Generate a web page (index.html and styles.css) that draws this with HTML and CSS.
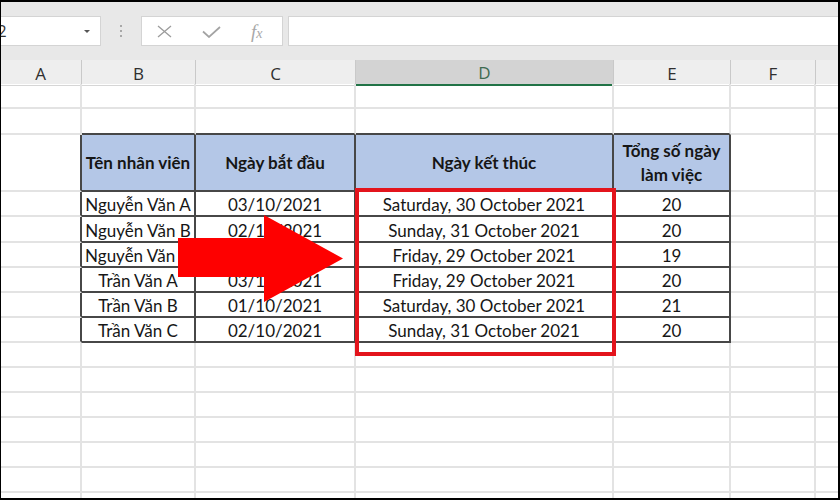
FILE: index.html
```html
<!DOCTYPE html>
<html lang="vi">
<head>
<meta charset="utf-8">
<title>Excel</title>
<link rel="stylesheet" href="styles.css">
</head>
<body>
<div class="frame">
  <div class="toolbar">
    <div class="namebox"><span class="ref">D2</span><span class="caret"></span></div>
    <div class="grip"><i></i><i></i><i></i></div>
    <div class="fbtns">
      <svg class="ico-x" width="15" height="13" viewBox="0 0 15 13"><path d="M1 1L14 12M14 1L1 12" stroke="#9c9c9c" stroke-width="1.3" fill="none"/></svg>
      <svg class="ico-ok" width="19" height="12" viewBox="0 0 19 12"><path d="M1 5.5L7 11L18 1" stroke="#a3a3a3" stroke-width="1.7" fill="none"/></svg>
      <span class="fx">f<span class="fx-x">x</span></span>
    </div>
    <div class="finput"></div>
  </div>
  <div class="colheads">
    <div class="ch">A</div><div class="ch">B</div><div class="ch">C</div><div class="ch sel">D</div><div class="ch">E</div><div class="ch">F</div><div class="ch"></div>
  </div>
  <div class="sheet">
    <div class="row"><div></div><div></div><div></div><div></div><div></div><div></div><div></div></div>
    <div class="row r26"><div></div><div class="tb"></div><div class="tb"></div><div class="tb"></div><div class="tb"></div><div></div><div></div></div>
    <div class="row hdr"><div class="tr"></div><div class="t name">Tên nhân viên</div><div class="t">Ngày bắt đầu</div><div class="t">Ngày kết thúc</div><div class="t two">Tổng số ngày<br>làm việc</div><div></div><div></div></div>
    <div class="row"><div class="tr"></div><div class="t name">Nguyễn Văn A</div><div class="t">03/10/2021</div><div class="t">Saturday, 30 October 2021</div><div class="t">20</div><div></div><div></div></div>
    <div class="row r26"><div class="tr"></div><div class="t name">Nguyễn Văn B</div><div class="t">02/10/2021</div><div class="t">Sunday, 31 October 2021</div><div class="t">20</div><div></div><div></div></div>
    <div class="row"><div class="tr"></div><div class="t name">Nguyễn Văn C</div><div class="t">01/10/2021</div><div class="t">Friday, 29 October 2021</div><div class="t">19</div><div></div><div></div></div>
    <div class="row"><div class="tr"></div><div class="t name">Trần Văn A</div><div class="t">03/10/2021</div><div class="t">Friday, 29 October 2021</div><div class="t">20</div><div></div><div></div></div>
    <div class="row"><div class="tr"></div><div class="t name">Trần Văn B</div><div class="t">01/10/2021</div><div class="t">Saturday, 30 October 2021</div><div class="t">21</div><div></div><div></div></div>
    <div class="row"><div class="tr"></div><div class="t name">Trần Văn C</div><div class="t">02/10/2021</div><div class="t">Sunday, 31 October 2021</div><div class="t">20</div><div></div><div></div></div>
    <div class="row"><div></div><div></div><div></div><div></div><div></div><div></div><div></div></div>
    <div class="row"><div></div><div></div><div></div><div></div><div></div><div></div><div></div></div>
    <div class="row"><div></div><div></div><div></div><div></div><div></div><div></div><div></div></div>
    <div class="row"><div></div><div></div><div></div><div></div><div></div><div></div><div></div></div>
    <div class="row"><div></div><div></div><div></div><div></div><div></div><div></div><div></div></div>
    <div class="row"><div></div><div></div><div></div><div></div><div></div><div></div><div></div></div>
    <div class="row"><div></div><div></div><div></div><div></div><div></div><div></div><div></div></div>
  </div>
  <div class="highlight"></div>
  <svg class="arrow" width="180" height="100" viewBox="0 0 180 100"><polygon points="8,28 94,28 94,5 173,48.5 94,92 94,67 8,67" fill="#fe0000"/></svg>
</div>
</body>
</html>
```

FILE: styles.css
```css
html, body {
  margin: 0;
  padding: 0;
  background: #fff;
}

.frame {
  position: relative;
  width: 840px;
  height: 500px;
  overflow: hidden;
  background: #fff;
  font-family: Lato, "Noto Sans", sans-serif;
}

.frame::after {
  content: "";
  position: absolute;
  inset: 0;
  border-style: solid;
  border-color: #000;
  border-width: 2px 2px 2px 1px;
  pointer-events: none;
}

/* ---------- toolbar ---------- */
.toolbar {
  height: 60px;
  box-sizing: border-box;
  padding-top: 16px;
  background: #e8e8e8;
  display: flex;
  align-items: flex-start;
}

.namebox {
  width: 101px;
  height: 30px;
  box-sizing: border-box;
  background: #fff;
  border: 1px solid #d4d4d4;
  border-left: none;
  display: flex;
  align-items: center;
  overflow: hidden;
  font-family: "Open Sans", sans-serif;
  font-size: 16px;
  color: #333;
}

.ref {
  margin-left: -14px;
}

.caret {
  margin-left: auto;
  margin-right: 10px;
  width: 0;
  height: 0;
  border-left: 3px solid transparent;
  border-right: 3px solid transparent;
  border-top: 3px solid #555;
}

.grip {
  width: 40px;
  height: 30px;
  box-sizing: border-box;
  padding-top: 9px;
  display: flex;
  flex-direction: column;
  align-items: center;
  gap: 3px;
}

.grip i {
  display: block;
  width: 2px;
  height: 2px;
  background: #a8a8a8;
}

.fbtns {
  width: 142px;
  height: 30px;
  box-sizing: border-box;
  background: #fff;
  border: 1px solid #d4d4d4;
  display: flex;
  align-items: center;
}

.ico-x {
  margin-left: 15px;
}

.ico-ok {
  margin-left: 30px;
  margin-top: 2px;
}

.fx {
  margin-left: 30px;
  font-family: "Liberation Serif", serif;
  font-style: italic;
  font-size: 19px;
  color: #a8a8a8;
  line-height: 1;
}

.fx-x {
  font-size: 14px;
}

.finput {
  flex: 1;
  height: 30px;
  box-sizing: border-box;
  margin-left: 5px;
  background: #fff;
  border: 1px solid #d4d4d4;
  border-right: none;
}

/* ---------- column headers ---------- */
.colheads {
  display: grid;
  grid-template-columns: 82px 114px 160px 258px 117px 85px 1fr;
  height: 24px;
  background: #eeeeee;
}

.ch {
  box-sizing: border-box;
  border-right: 1px solid #c9c9c9;
  border-bottom: 1px solid #d6d6d6;
  display: flex;
  align-items: center;
  justify-content: center;
  padding-top: 1px;
  font-family: "Open Sans", sans-serif;
  font-size: 17px;
  color: #2f2f2f;
}

.ch.sel {
  background: #d3d3d3;
  border-bottom: 2px solid #217346;
  color: #3e6b50;
}

/* ---------- sheet ---------- */
.row {
  display: grid;
  grid-template-columns: 82px 114px 160px 258px 117px 85px 1fr;
  height: 25px;
}

.row.r26 {
  height: 26px;
}

.row.hdr {
  height: 57px;
}

.row > div {
  box-sizing: border-box;
  border-right: 2px solid #e3e3e3;
  border-bottom: 2px solid #e3e3e3;
  display: flex;
  align-items: center;
  justify-content: center;
  padding-top: 2px;
  white-space: nowrap;
  overflow: hidden;
  font-size: 17px;
  color: #161616;
}

.row > .t {
  border-right-color: #474747;
  border-bottom-color: #474747;
}

.row > .tb {
  border-bottom-color: #474747;
}

.row > .tr {
  border-right-color: #474747;
}

.row.hdr > .t {
  background: #b4c7e7;
  font-weight: 700;
  padding-top: 0;
  line-height: 24px;
  text-align: center;
}

.row.hdr > .two {
  white-space: normal;
}

/* ---------- overlays ---------- */
.highlight {
  position: absolute;
  left: 355px;
  top: 188px;
  width: 261px;
  height: 168px;
  box-sizing: border-box;
  border: 4px solid #e3141c;
  pointer-events: none;
}

.arrow {
  position: absolute;
  left: 170px;
  top: 210px;
}
```
